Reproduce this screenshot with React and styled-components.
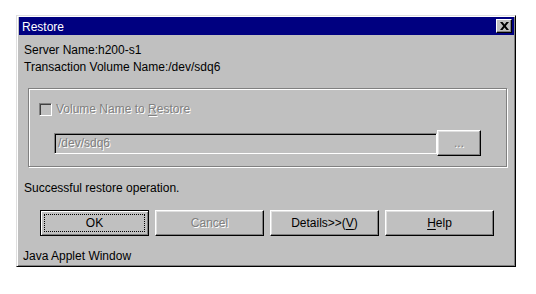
import React from "react";
import styled, { createGlobalStyle } from "styled-components";

const GlobalStyle = createGlobalStyle`
  html, body {
    margin: 0;
    padding: 0;
    background: #ffffff;
  }
  body {
    font-family: "Liberation Sans", Arial, sans-serif;
    font-size: 12px;
    color: #000;
  }
`;

const Page = styled.div`
  padding: 15px 0 0 16px;
`;

const Window = styled.div`
  box-sizing: border-box;
  width: 500px;
  height: 252px;
  display: flex;
  flex-direction: column;
  background: #c0c0c0;
  border-style: solid;
  border-width: 1px;
  border-color: #dfdfdf #000 #000 #dfdfdf;
  box-shadow: inset 1px 1px #fff, inset -1px -1px #808080;
  padding: 1px 1px 1px 2px;
`;

const TitleBar = styled.div`
  height: 18px;
  display: flex;
  align-items: center;
  justify-content: space-between;
  background: #000080;
  color: #fff;
  padding: 0 2px 0 3px;
`;

const TitleText = styled.span`
  line-height: 18px;
  padding-top: 1px;
`;

const CloseButton = styled.div`
  box-sizing: border-box;
  width: 16px;
  height: 14px;
  display: flex;
  align-items: center;
  justify-content: center;
  background: #c0c0c0;
  border-style: solid;
  border-width: 1px;
  border-color: #fff #000 #000 #fff;
  box-shadow: inset -1px -1px #808080;
`;

const Body = styled.div`
  flex: 1;
  display: flex;
  flex-direction: column;
  padding: 7px 0 0 5px;
`;

const InfoLine = styled.div`
  line-height: 17px;
  white-space: nowrap;
`;

const Group = styled.div`
  box-sizing: border-box;
  width: 479px;
  height: 79px;
  margin: 12px 0 0 4px;
  border: 1px solid #808080;
  box-shadow: 1px 1px #fff, inset 1px 1px #fff;
  padding: 14px 0 0 10px;
  display: flex;
  flex-direction: column;
`;

const CheckRow = styled.div`
  display: flex;
  align-items: center;
  height: 13px;
`;

const CheckBox = styled.div`
  box-sizing: border-box;
  width: 13px;
  height: 13px;
  border-style: solid;
  border-width: 1px;
  border-color: #808080 #fff #fff #808080;
  box-shadow: inset 1px 1px #404040;
  background: #c0c0c0;
`;

const DisabledText = styled.span`
  color: #808080;
  text-shadow: 1px 1px #fff;
  white-space: nowrap;
`;

const CheckLabel = styled(DisabledText)`
  margin-left: 4px;
  line-height: 13px;
`;

const Underline = styled.span`
  text-decoration: underline;
  text-underline-offset: 2px;
`;

const FieldRow = styled.div`
  display: flex;
  align-items: center;
  margin: 14px 0 0 15px;
`;

const TextField = styled.div`
  box-sizing: border-box;
  width: 383px;
  height: 21px;
  border-style: solid;
  border-width: 1px;
  border-color: #808080 #fff #fff #808080;
  box-shadow: inset 1px 1px #000;
  padding: 0 0 0 3px;
  display: flex;
  align-items: center;
`;

const RaisedButton = styled.div`
  box-sizing: border-box;
  width: ${(p) => p.$w || 109}px;
  height: 26px;
  display: flex;
  align-items: center;
  justify-content: center;
  border-style: solid;
  border-width: 1px;
  border-color: #fff #000 #000 #fff;
  box-shadow: inset -1px -1px #808080, inset 1px 1px #dfdfdf;
  white-space: nowrap;
`;

const DefaultButton = styled(RaisedButton)`
  border: 1px solid #000;
  box-shadow: inset 1px 1px #fff, inset -1px -1px #808080, inset -2px -2px #c0c0c0;
  padding: 3px;
`;

const FocusRing = styled.div`
  box-sizing: border-box;
  width: 100%;
  height: 100%;
  border: 1px dotted #000;
  display: flex;
  align-items: center;
  justify-content: center;
`;

const Status = styled.div`
  line-height: 16px;
  margin-top: 13px;
`;

const ButtonRow = styled.div`
  display: flex;
  gap: 6px;
  margin: 14px 0 0 16px;
`;

const Footer = styled.div`
  margin-top: auto;
  line-height: 18px;
  padding-left: 4px;
  margin-left: -5px;
`;

const CloseIcon = () => (
  <svg width="9" height="8" viewBox="0 0 9 8">
    <path d="M0 0h2.5l2 2.5 2-2.5H9L5.8 4 9 8H6.5l-2-2.5-2 2.5H0l3.2-4z" fill="#000" />
  </svg>
);

const App = () => {
  return (
    <Page>
      <GlobalStyle />
      <Window>
        <TitleBar>
          <TitleText>Restore</TitleText>
          <CloseButton>
            <CloseIcon />
          </CloseButton>
        </TitleBar>
        <Body>
          <InfoLine>Server Name:h200-s1</InfoLine>
          <InfoLine>Transaction Volume Name:/dev/sdq6</InfoLine>
          <Group>
            <CheckRow>
              <CheckBox />
              <CheckLabel>
                Volume Name to <Underline>R</Underline>estore
              </CheckLabel>
            </CheckRow>
            <FieldRow>
              <TextField>
                <DisabledText>/dev/sdq6</DisabledText>
              </TextField>
              <RaisedButton $w={44}>
                <DisabledText>...</DisabledText>
              </RaisedButton>
            </FieldRow>
          </Group>
          <Status>Successful restore operation.</Status>
          <ButtonRow>
            <DefaultButton>
              <FocusRing>OK</FocusRing>
            </DefaultButton>
            <RaisedButton>
              <DisabledText>Cancel</DisabledText>
            </RaisedButton>
            <RaisedButton>
              Details&gt;&gt;(<Underline>V</Underline>)
            </RaisedButton>
            <RaisedButton>
              <span>
                <Underline>H</Underline>elp
              </span>
            </RaisedButton>
          </ButtonRow>
          <Footer>Java Applet Window</Footer>
        </Body>
      </Window>
    </Page>
  );
};

export default App;
